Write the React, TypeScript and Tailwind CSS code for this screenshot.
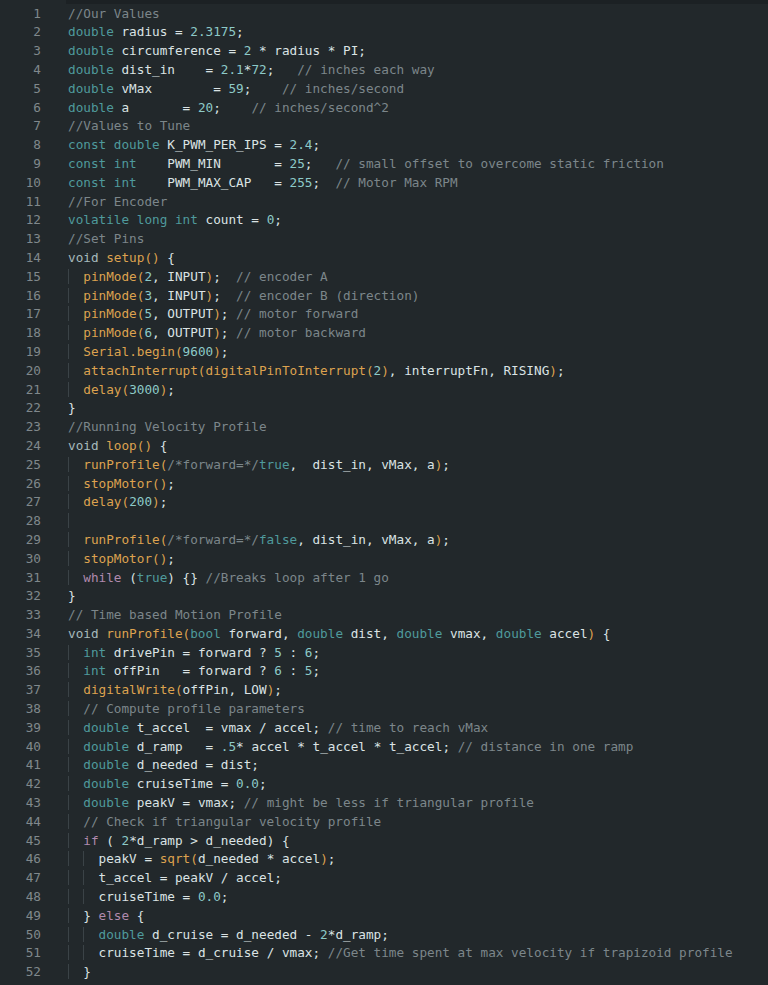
import React from "react";

const P = (s: string, n: number) => s.padEnd(n, " ");

const LINES: string[] = [
  "//Our Values",
  "double radius = 2.3175;",
  "double circumference = 2 * radius * PI;",
  P("double dist_in", 18) + P("= 2.1*72;", 12) + "// inches each way",
  P("double vMax", 19) + P("= 59;", 9) + "// inches/second",
  P("double a", 15) + P("= 20;", 9) + "// inches/second^2",
  "//Values to Tune",
  "const double K_PWM_PER_IPS = 2.4;",
  P("const int", 13) + P("PWM_MIN", 14) + P("= 25;", 8) + "// small offset to overcome static friction",
  P("const int", 13) + P("PWM_MAX_CAP", 14) + P("= 255;", 8) + "// Motor Max RPM",
  "//For Encoder",
  "volatile long int count = 0;",
  "//Set Pins",
  "void setup() {",
  "  pinMode(2, INPUT);  // encoder A",
  "  pinMode(3, INPUT);  // encoder B (direction)",
  "  pinMode(5, OUTPUT); // motor forward",
  "  pinMode(6, OUTPUT); // motor backward",
  "  Serial.begin(9600);",
  "  attachInterrupt(digitalPinToInterrupt(2), interruptFn, RISING);",
  "  delay(3000);",
  "}",
  "//Running Velocity Profile",
  "void loop() {",
  "  runProfile(/*forward=*/true,  dist_in, vMax, a);",
  "  stopMotor();",
  "  delay(200);",
  "  ",
  "  runProfile(/*forward=*/false, dist_in, vMax, a);",
  "  stopMotor();",
  "  while (true) {} //Breaks loop after 1 go",
  "}",
  "// Time based Motion Profile",
  "void runProfile(bool forward, double dist, double vmax, double accel) {",
  "  int drivePin = forward ? 5 : 6;",
  "  int offPin   = forward ? 6 : 5;",
  "  digitalWrite(offPin, LOW);",
  "  // Compute profile parameters",
  "  double t_accel  = vmax / accel; // time to reach vMax",
  "  double d_ramp   = .5* accel * t_accel * t_accel; // distance in one ramp",
  "  double d_needed = dist;",
  "  double cruiseTime = 0.0;",
  "  double peakV = vmax; // might be less if triangular profile",
  "  // Check if triangular velocity profile",
  "  if ( 2*d_ramp > d_needed) {",
  "    peakV = sqrt(d_needed * accel);",
  "    t_accel = peakV / accel;",
  "    cruiseTime = 0.0;",
  "  } else {",
  "    double d_cruise = d_needed - 2*d_ramp;",
  "    cruiseTime = d_cruise / vmax; //Get time spent at max velocity if trapizoid profile",
  "  }",
];

const KW = new Set(["double", "const", "int", "volatile", "long", "bool", "true", "false"]);
const CTRL = new Set(["if", "else", "while"]);

type Tok = { t: string; c: string };

const C = {
  text: "text-[#dbe3e4]",
  kw: "text-[#4f9a9c]",
  void: "text-[#a6b9bb]",
  num: "text-[#8dcac8]",
  com: "text-[#7c868a]",
  fn: "text-[#dda24f]",
  ctrl: "text-[#b08aae]",
};

function tokenize(src: string): Tok[] {
  const re = /(\/\/.*$)|(\/\*.*?\*\/)|([A-Za-z_][A-Za-z0-9_]*)|(\d+\.\d+|\.\d+|\d+)|(\s+)|(.)/g;
  const out: Tok[] = [];
  const stack: boolean[] = [];
  let m: RegExpExecArray | null;
  let prevFn = false;
  let prevSerial = false;
  while ((m = re.exec(src)) !== null) {
    const s = m[0];
    if (m[1] || m[2]) {
      out.push({ t: s, c: C.com });
      prevFn = false;
      continue;
    }
    if (m[3]) {
      const next = src[re.lastIndex];
      let c = C.text;
      let isFn = false;
      if (s === "void") c = C.void;
      else if (KW.has(s)) c = C.kw;
      else if (CTRL.has(s)) c = C.ctrl;
      else if (s === "Serial") c = C.fn;
      else if (next === "(") {
        c = C.fn;
        isFn = true;
      }
      out.push({ t: s, c });
      prevFn = isFn;
      prevSerial = s === "Serial";
      continue;
    }
    if (m[4]) {
      out.push({ t: s, c: C.num });
      prevFn = false;
      continue;
    }
    if (s === "(") {
      stack.push(prevFn);
      out.push({ t: s, c: prevFn ? C.fn : C.text });
    } else if (s === ")") {
      const call = stack.pop();
      out.push({ t: s, c: call ? C.fn : C.text });
    } else if (s === "." && prevSerial) {
      out.push({ t: s, c: C.fn });
    } else {
      out.push({ t: s, c: C.text });
    }
    prevFn = false;
    prevSerial = false;
  }
  return out;
}

function CodeLine({ src }: { src: string }) {
  const indentMatch = src.match(/^ */);
  const indent = indentMatch ? indentMatch[0].length : 0;
  const levels = Math.floor(indent / 2);
  const rest = src.slice(levels * 2);
  const toks = tokenize(rest);
  const guides = [];
  for (let i = 0; i < levels; i++) {
    guides.push(
      <span key={"g" + i} className="shadow-[inset_1px_0_0_#3b4347]">
        {"  "}
      </span>
    );
  }
  return (
    <div className="h-[18.8px] leading-[18.8px] whitespace-pre">
      {guides}
      {toks.map((tk, i) => (
        <span key={i} className={tk.c}>
          {tk.t}
        </span>
      ))}
    </div>
  );
}

export default function App() {
  return (
    <div className="w-[768px] h-[985px] bg-[#22282b] overflow-hidden font-['DejaVu_Sans_Mono',monospace] text-[12.7px] flex flex-col">
      <div className="flex h-[4px] shrink-0">
        <div className="w-[66px]" />
        <div className="flex-1 bg-[#1c2124]" />
      </div>
      <div className="flex pt-[0.6px]">
        <div className="w-[66px] shrink-0 pr-[25px] text-right text-[#80888c]">
          {LINES.map((_, i) => (
            <div key={i} className="h-[18.8px] leading-[18.8px]">
              {i + 1}
            </div>
          ))}
        </div>
        <div className="flex-1 pl-[2px]">
          {LINES.map((l, i) => (
            <CodeLine key={i} src={l} />
          ))}
        </div>
      </div>
    </div>
  );
}
